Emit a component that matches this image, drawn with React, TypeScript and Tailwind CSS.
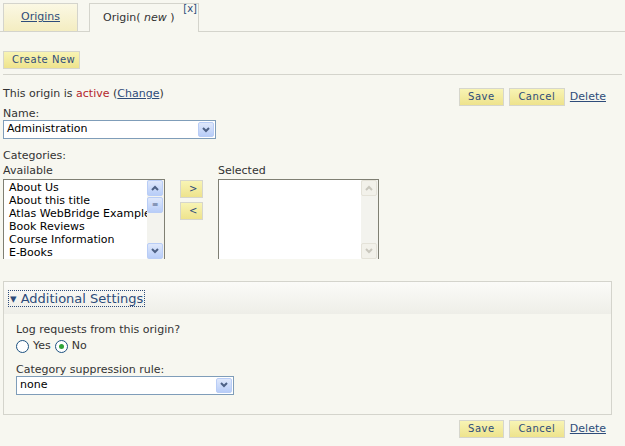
const font = { fontFamily: "Verdana, 'DejaVu Sans', sans-serif" }

function YButton({ label, className = "" }: { label: string; className?: string }) {
  return (
    <button
      type="button"
      className={`h-[18px] whitespace-nowrap border border-[#d6d6cc] bg-gradient-to-b from-[#f8f4b4] to-[#eee38c] px-2 text-[10px] leading-none tracking-[0.5px] text-[#2e4c7a] ${className}`}
    >
      {label}
    </button>
  )
}

function SelectBox({ value, width }: { value: string; width: string }) {
  return (
    <div className={`flex h-[19px] items-center justify-between border border-[#7f9db9] bg-white pl-[3px] pr-px ${width}`}>
      <span className="text-[11px] text-black">{value}</span>
      <span className="flex h-[15px] w-[16px] items-center justify-center rounded-[2px] border border-[#b9cdf6] bg-gradient-to-b from-[#dfe8fb] to-[#b8cdf8]">
        <svg width="8" height="6" viewBox="0 0 8 6"><path d="M1 1l3 3 3-3" stroke="#4d6185" strokeWidth="2" fill="none" /></svg>
      </span>
    </div>
  )
}

function ScrollBtn({ up, disabled }: { up: boolean; disabled?: boolean }) {
  return (
    <span className={`flex h-[16px] w-[16px] items-center justify-center rounded-[2px] border ${disabled ? "border-[#e4e2d8] bg-[#f2f1ea]" : "border-[#b9cdf6] bg-gradient-to-b from-[#dfe8fb] to-[#b8cdf8]"}`}>
      <svg width="8" height="6" viewBox="0 0 8 6"><path d={up ? "M1 5l3-3 3 3" : "M1 1l3 3 3-3"} stroke={disabled ? "#c9c7bd" : "#4d6185"} strokeWidth="2" fill="none" /></svg>
    </span>
  )
}

export default function App() {
  const items = ["About Us", "About this title", "Atlas WebBridge Example", "Book Reviews", "Course Information", "E-Books"]
  return (
    <div className="h-[446px] w-[625px] overflow-hidden bg-[#f7f7f0] text-[11px] text-[#333]" style={font}>
      <div className="flex items-end border-b border-[#d4d4cc] pl-[3px] pt-[3px]">
        <div className="flex h-[28px] w-[75px] items-center justify-center border border-b-0 border-[#d4d4cc] bg-gradient-to-b from-[#fbf8e4] to-[#f4edc1]">
          <a className="text-[11px] text-[#2e4c7a] underline">Origins</a>
        </div>
        <div className="relative -mb-px ml-[11px] flex h-[29px] w-[110px] items-center border border-b-0 border-[#d4d4cc] bg-[#f7f7f0] pl-[13px]">
          <span className="text-[11px] text-[#333]">Origin( <i>new</i> )</span>
          <span className="absolute right-[1px] top-0 text-[10px] leading-none text-[#2e4c7a]">[x]</span>
        </div>
      </div>
      <div className="px-[3px]">
        <div className="mt-[19px]"><YButton label="Create New" className="w-[77px] px-0" /></div>
        <div className="mt-[5px] border-t border-[#d4d4cc]" />
        <div className="mt-[13px] flex items-center justify-between pr-[16px]">
          <span className="mt-[-2px] self-start">This origin is <span className="text-[#b3262c]">active</span> (<a className="text-[#2e4c7a] underline">Change</a>)</span>
          <div className="flex items-center gap-[5px]">
            <YButton label="Save" className="w-[45px]" />
            <YButton label="Cancel" className="w-[56px]" />
            <a className="text-[11px] text-[#2e4c7a] underline">Delete</a>
          </div>
        </div>
        <div className="mt-[1px] leading-[13px]">Name:</div>
        <SelectBox value="Administration" width="w-[213px]" />
        <div className="mt-[10px] leading-[13px]">Categories:</div>
        <div className="mt-[2px] flex">
          <div>
            <div className="leading-[13px]">Available</div>
            <div className="mt-[2px] flex h-[80px] w-[162px] overflow-hidden border border-[#7f7f73] border-b-0 bg-white">
              <div className="flex-1 overflow-hidden whitespace-nowrap pl-[5px] pt-[1px] text-[11px] leading-[13px] text-black">
                {items.map((i) => <div key={i}>{i}</div>)}
              </div>
              <div className="flex w-[17px] flex-col justify-between bg-[#f3f3ee]">
                <div><ScrollBtn up /><span className="mt-[1px] flex h-[16px] w-[16px] items-center justify-center rounded-[2px] border border-[#b9cdf6] bg-gradient-to-b from-[#dfe8fb] to-[#b8cdf8] text-[8px] text-[#4d6185]">≡</span></div>
                <ScrollBtn up={false} />
              </div>
            </div>
          </div>
          <div className="ml-[15px] mt-[16px] flex flex-col gap-[4px]">
            <YButton label=">" className="w-[23px] px-0" />
            <YButton label="<" className="w-[23px] px-0" />
          </div>
          <div className="ml-[15px]">
            <div className="leading-[13px]">Selected</div>
            <div className="mt-[2px] flex h-[80px] w-[161px] justify-end border border-[#7f7f73] border-b-0 bg-white">
              <div className="flex w-[17px] flex-col justify-between bg-[#f3f3ee]">
                <ScrollBtn up disabled />
                <ScrollBtn up={false} disabled />
              </div>
            </div>
          </div>
        </div>
        <div className="mt-[22px] w-[609px] border border-[#d4d4cc]">
          <div className="flex h-[32px] items-center bg-gradient-to-b from-[#fbfbf8] to-[#eeeee8] pl-[4px]">
            <span className="border border-dotted border-[#2e4c7a] px-px text-[13px] leading-[15px] text-[#2e4c7a]">▾ Additional Settings</span>
          </div>
          <div className="h-[100px] pl-[12px] pt-[9px]">
            <div className="leading-[13px]">Log requests from this origin?</div>
            <div className="mt-[2px] flex items-center gap-[4px]">
              <span className="h-[13px] w-[13px] rounded-full border border-[#1c5180] bg-white" />
              <span>Yes</span>
              <span className="flex h-[13px] w-[13px] items-center justify-center rounded-full border border-[#1c5180] bg-white"><span className="h-[5px] w-[5px] rounded-full bg-[#2fa338]" /></span>
              <span>No</span>
            </div>
            <div className="mt-[8px] leading-[13px]">Category suppression rule:</div>
            <SelectBox value="none" width="w-[218px]" />
          </div>
        </div>
        <div className="mt-[5px] flex items-center justify-end gap-[5px] pr-[16px]">
          <YButton label="Save" className="w-[45px]" />
          <YButton label="Cancel" className="w-[56px]" />
          <a className="text-[11px] text-[#2e4c7a] underline">Delete</a>
        </div>
      </div>
    </div>
  )
}
